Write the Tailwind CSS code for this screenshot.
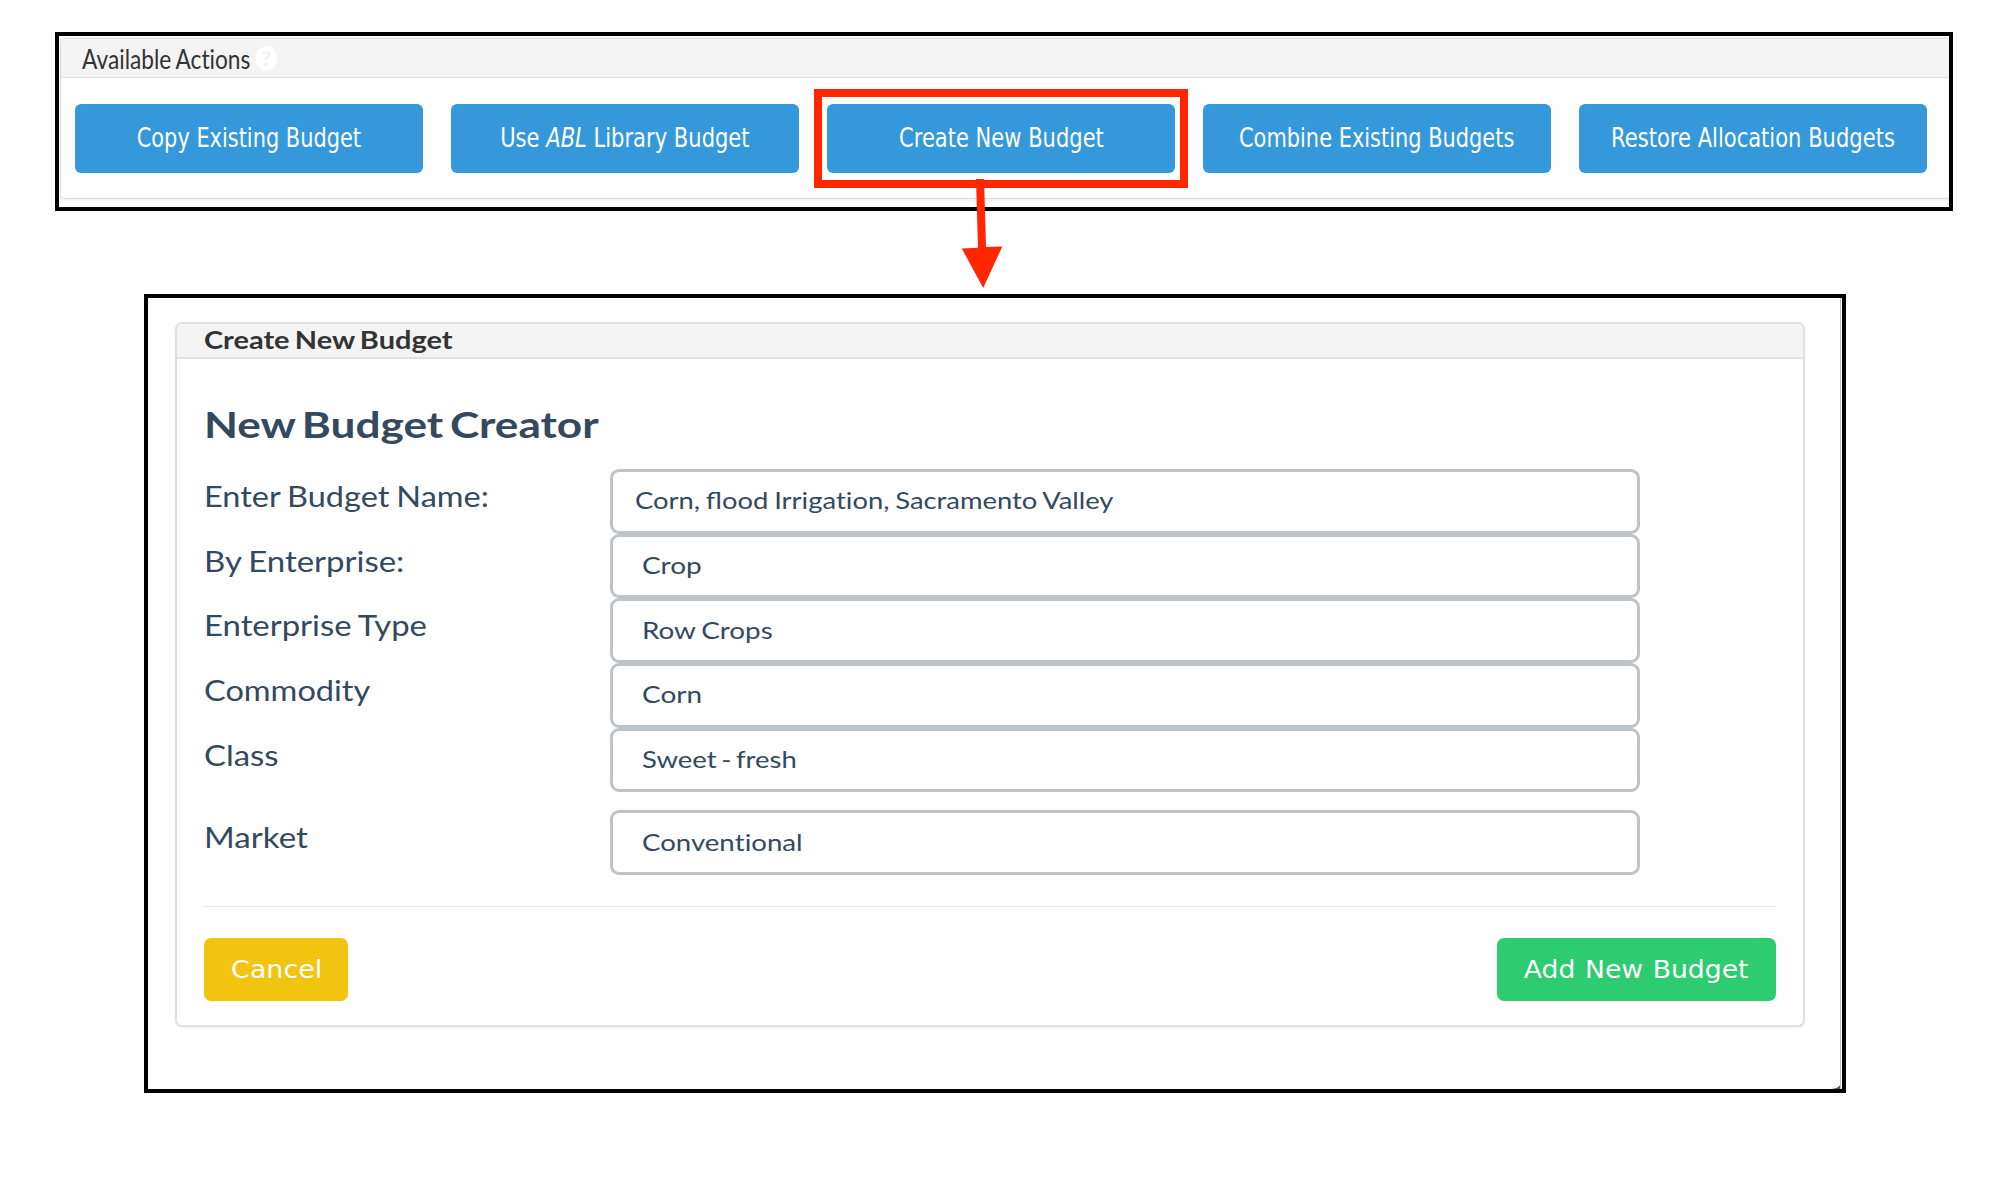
<!DOCTYPE html>
<html lang="en">
<head>
<meta charset="utf-8">
<title>Create New Budget</title>
<script src="https://cdn.jsdelivr.net/npm/@tailwindcss/browser@4"></script>
</head>
<body class="relative h-[1200px] w-[2000px] overflow-hidden bg-white pt-8 font-['Lato',sans-serif] text-[#34495e]">

<!-- Actions toolbar -->
<section class="ml-[55px] h-[179px] w-[1898px] overflow-hidden border-4 border-black bg-[#fefefe] pt-[2px] pl-px">
  <div class="h-[161px] rounded-l-[5px] border border-r-0 border-[#dddddd] bg-[#fefefe] shadow-[0_2px_2px_rgba(0,0,0,0.05)]">
    <header class="flex h-[39px] items-center rounded-tl-[4px] border-b border-[#dddddd] bg-[#f4f4f4] pl-[21px]">
      <span class="w-[168px] origin-left scale-x-[0.873] pt-[2px] text-[26px] leading-9 whitespace-nowrap text-[#333333] [word-spacing:-0.04em]">Available Ac<span class="[font-variant-ligatures:none]">ti</span>ons</span>
      <span class="ml-[6px] flex h-[25px] w-[21px] items-center justify-center rounded-[50%] bg-[#fefefe] text-[21px] font-black text-[#f1f1f1]">?</span>
    </header>
    <div class="flex gap-[28px] pt-[26px] pl-[14px] font-['DejaVu_Sans',sans-serif] text-[27px] text-white">
      <button class="flex h-[69px] w-[348px] shrink-0 items-center justify-center rounded-[6px] bg-[#3598db]"><span class="scale-x-[0.774] whitespace-nowrap">Copy Existing Budget</span></button>
      <button class="flex h-[69px] w-[348px] shrink-0 items-center justify-center rounded-[6px] bg-[#3598db]"><span class="scale-x-[0.78] whitespace-nowrap">Use <i>ABL</i> Library Budget</span></button>
      <button class="flex h-[69px] w-[348px] shrink-0 items-center justify-center rounded-[6px] bg-[#3598db]"><span class="scale-x-[0.779] whitespace-nowrap">Create New Budget</span></button>
      <button class="flex h-[69px] w-[348px] shrink-0 items-center justify-center rounded-[6px] bg-[#3598db]"><span class="-mx-4 scale-x-[0.775] whitespace-nowrap">Combine Existing Budgets</span></button>
      <button class="flex h-[69px] w-[348px] shrink-0 items-center justify-center rounded-[6px] bg-[#3598db]"><span class="-mx-4 scale-x-[0.78] whitespace-nowrap">Restore Allocation Budgets</span></button>
    </div>
  </div>
</section>

<!-- Budget form -->
<section class="relative mt-[83px] ml-[144px] h-[799px] w-[1702px] border-4 border-black bg-[#fefefe] pt-6 pl-[27px]">
  <svg class="absolute right-0 bottom-0" width="10" height="10" viewBox="0 0 10 10"><path d="M9 0V4Q8 9 0 10H9Z" fill="#555"/></svg>
  <div class="absolute inset-y-0 right-px w-px bg-[#bfbfbf]"></div>
  <div class="h-[705px] w-[1630px] rounded-[7px] border-2 border-[#e0e0e0] bg-[#fefefe] shadow-[0_1px_2px_rgba(0,0,0,0.05)]">
    <header class="flex h-[35px] items-center rounded-t-[5px] border-b-2 border-[#e0e0e0] bg-[#f4f4f4] pb-px pl-[27px]">
      <span class="origin-left scale-x-[1.206] text-2xl font-bold whitespace-nowrap text-[#333333] [word-spacing:-0.06em]">Create New Budget</span>
    </header>
    <form class="w-[1599px] pl-[27px]">
      <h1 class="flex pt-[43px] pb-[23px] text-[37px] leading-[44px] font-bold"><span class="origin-left scale-x-[1.193] whitespace-nowrap [word-spacing:-0.09em]">New Budget Creator</span></h1>
      <div class="grid auto-rows-[64.7px] grid-cols-[406px_1030px] text-[28px] leading-[54px] [word-spacing:-0.04em]">
        <label class="w-fit origin-left scale-x-[1.16] whitespace-nowrap">Enter Budget Name:</label>
        <div class="flex items-center rounded-[9px] border-3 border-[#bdc3c7] pb-[2px] pl-[22px] text-2xl"><span class="origin-left scale-x-[1.142] whitespace-nowrap">Corn, flood Irriga<span class="[font-variant-ligatures:none]">ti</span>on, Sacramento Valley</span></div>
        <label class="w-fit origin-left scale-x-[1.177] whitespace-nowrap">By Enterprise:</label>
        <div class="flex items-center rounded-[9px] border-3 border-[#bdc3c7] pb-[2px] pl-[29px] text-2xl"><span class="origin-left scale-x-[1.165] whitespace-nowrap">Crop</span></div>
        <label class="w-fit origin-left scale-x-[1.174] whitespace-nowrap">Enterprise Type</label>
        <div class="flex items-center rounded-[9px] border-3 border-[#bdc3c7] pb-[2px] pl-[29px] text-2xl"><span class="origin-left scale-x-[1.16] whitespace-nowrap">Row Crops</span></div>
        <label class="w-fit origin-left scale-x-[1.162] whitespace-nowrap">Commodity</label>
        <div class="flex items-center rounded-[9px] border-3 border-[#bdc3c7] pb-[2px] pl-[29px] text-2xl"><span class="origin-left scale-x-[1.165] whitespace-nowrap">Corn</span></div>
        <label class="w-fit origin-left scale-x-[1.175] whitespace-nowrap">Class</label>
        <div class="flex items-center rounded-[9px] border-3 border-[#bdc3c7] pb-[2px] pl-[29px] text-2xl"><span class="origin-left scale-x-[1.145] whitespace-nowrap [word-spacing:-0.09em]">Sweet - fresh</span></div>
      </div>
      <div class="mt-[18px] grid h-[64.7px] grid-cols-[406px_1030px] text-[28px] leading-[54px]">
        <label class="w-fit origin-left scale-x-[1.183] whitespace-nowrap">Market</label>
        <div class="flex items-center rounded-[9px] border-3 border-[#bdc3c7] pb-[2px] pl-[29px] text-2xl"><span class="origin-left scale-x-[1.15] whitespace-nowrap">Conven<span class="[font-variant-ligatures:none]">ti</span>onal</span></div>
      </div>
      <hr class="mt-[31px] border-t-[1.5px] border-[#e8e8e8]">
      <div class="mt-[31px] flex justify-between font-['DejaVu_Sans',sans-serif] text-2xl text-white">
        <button type="button" class="flex h-[63px] w-[144px] items-center justify-center rounded-[7px] bg-[#f1c40f] pl-px"><span class="scale-x-[1.12]">Cancel</span></button>
        <button type="button" class="flex h-[63px] w-[279px] items-center justify-center rounded-[7px] bg-[#2ecc71]"><span class="scale-x-[1.11] whitespace-nowrap [word-spacing:1px]">Add New Budget</span></button>
      </div>
    </form>
  </div>
</section>

<!-- Callout: highlight box and arrow -->
<div class="absolute top-[89px] left-[814px] h-[98.5px] w-[374px] border-8 border-[#ff2600]"></div>
<svg class="absolute top-[178px] left-[960px]" width="44" height="112" viewBox="960 178 44 112" fill="#ff2600">
  <path d="M976 179h8l2 68 16.3-.5L983.2 288 961.8 248.4l16.2-.6z"/>
</svg>
</body>
</html>
